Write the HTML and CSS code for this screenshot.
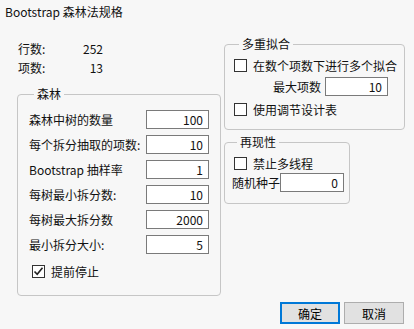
FILE: index.html
```html
<!DOCTYPE html>
<html lang="zh-CN">
<head>
    <meta charset="UTF-8">
    <title>Bootstrap 森林法规格</title>
    <link rel="stylesheet" href="styles.css">
</head>
<body>
    <div class="dialog">
        <div class="title">Bootstrap 森林法规格</div>

        <div class="main">
            <div class="col-left">
                <div class="stats">
                    <div class="stat"><span>行数:</span><span>252</span></div>
                    <div class="stat"><span>项数:</span><span>13</span></div>
                </div>

                <fieldset class="group forest">
                    <legend>森林</legend>
                    <div class="field"><span>森林中树的数量</span><div class="num">100</div></div>
                    <div class="field"><span>每个拆分抽取的项数:</span><div class="num">10</div></div>
                    <div class="field"><span>Bootstrap 抽样率</span><div class="num">1</div></div>
                    <div class="field"><span>每树最小拆分数:</span><div class="num">10</div></div>
                    <div class="field"><span>每树最大拆分数</span><div class="num">2000</div></div>
                    <div class="field"><span>最小拆分大小:</span><div class="num">5</div></div>
                    <label class="check early">
                        <span class="box checked">
                            <svg width="11" height="11" viewBox="0 0 11 11"><path d="M1.5 5.5 L4.2 8.3 L9.5 1.8" fill="none" stroke="#222" stroke-width="1.6"/></svg>
                        </span>
                        提前停止
                    </label>
                </fieldset>
            </div>

            <div class="col-right">
                <fieldset class="group multi">
                    <legend>多重拟合</legend>
                    <label class="check"><span class="box"></span>在数个项数下进行多个拟合</label>
                    <div class="field max-terms"><span>最大项数</span><div class="num">10</div></div>
                    <label class="check last"><span class="box"></span>使用调节设计表</label>
                </fieldset>

                <fieldset class="group repro">
                    <legend>再现性</legend>
                    <label class="check"><span class="box"></span>禁止多线程</label>
                    <div class="field seed"><span>随机种子</span><div class="num">0</div></div>
                </fieldset>
            </div>
        </div>

        <div class="actions">
            <button class="btn default">确定</button>
            <button class="btn">取消</button>
        </div>
    </div>
</body>
</html>
```

FILE: styles.css
```css
* {
    margin: 0;
    padding: 0;
    box-sizing: border-box;
}

body {
    font-family: "Noto Sans CJK SC", "Noto Sans", sans-serif;
    font-size: 12px;
    color: #111;
    background: #f7f7f7;
}

.dialog {
    width: 414px;
    height: 329px;
    display: flex;
    flex-direction: column;
}

.title {
    padding: 4px 5px 0;
    line-height: 16px;
}

.main {
    display: flex;
    gap: 3px;
    margin-top: 16px;
    padding-left: 17px;
}

.col-left {
    width: 204px;
}

.col-right {
    width: 181px;
    display: flex;
    flex-direction: column;
}

.stats {
    padding: 3px 0 0 1px;
    width: 86px;
}

.stat {
    display: flex;
    justify-content: space-between;
    line-height: 19px;
}

/* group boxes */
.group {
    border: 1px solid #c6c6c6;
    border-radius: 4px;
    min-width: 0;
}

.group legend {
    margin-left: 5px;
    padding: 0 3px;
    line-height: 16px;
}

.forest {
    margin-top: 9px;
    height: 210px;
    padding: 8px 11px 0 11px;
    display: flex;
    flex-direction: column;
    gap: 6px;
}

.field {
    display: flex;
    align-items: center;
    justify-content: space-between;
    height: 19px;
}

.num {
    width: 63px;
    height: 19px;
    line-height: 17px;
    border: 1px solid #7a7a7a;
    background: #fff;
    text-align: right;
    padding-right: 5px;
}

.check {
    display: flex;
    align-items: center;
    gap: 6px;
    height: 19px;
}

.box {
    width: 13px;
    height: 13px;
    border: 1px solid #333;
    background: #fff;
    display: flex;
    align-items: center;
    justify-content: center;
}

.early {
    margin-top: 2px;
    padding-left: 3px;
}

.multi {
    height: 94px;
    padding: 4px 0 0 9px;
}

.max-terms {
    justify-content: flex-start;
    gap: 4px;
    margin: 2px 0 0 39px;
}

.multi .last {
    margin-top: 4px;
}

.repro {
    width: 126px;
    height: 70px;
    margin-top: 4px;
    padding: 4px 0 0 7px;
}

.repro .check {
    margin-left: 2px;
}

.seed {
    justify-content: flex-start;
}

.seed .num {
    width: 64px;
}

.actions {
    display: flex;
    justify-content: flex-end;
    gap: 4px;
    padding-right: 10px;
    margin-top: 6px;
}

.btn {
    width: 60px;
    height: 22px;
    font: inherit;
    color: #000;
    background: #e1e1e1;
    border: 1px solid #adadad;
}

.btn.default {
    border: 2px solid #0078d7;
}
```
